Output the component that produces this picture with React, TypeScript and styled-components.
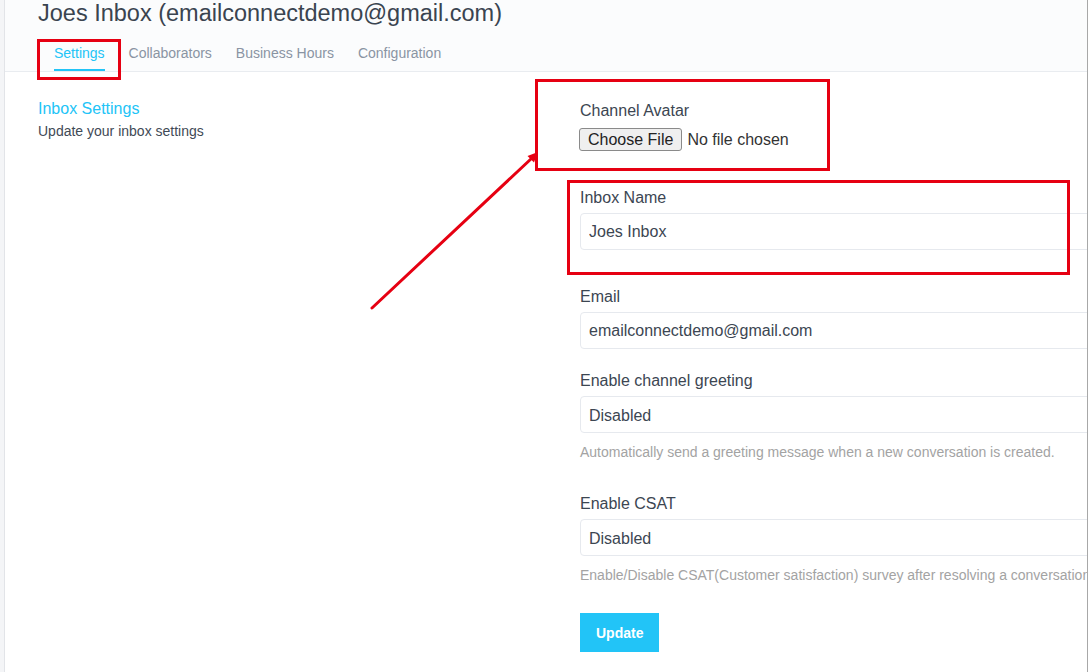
import React from "react";
import styled, { createGlobalStyle } from "styled-components";

const GlobalStyle = createGlobalStyle`
  html, body {
    margin: 0;
    padding: 0;
    background: #ffffff;
    overflow: hidden;
  }
  body {
    font-family: "Liberation Sans", Arial, sans-serif;
  }
  * { box-sizing: border-box; }
`;

const ACCENT = "#22c4f7";
const RED = "#e60012";

const Page = styled.div`
  position: relative;
  display: flex;
  width: 1089px;
  height: 672px;
  background: #ffffff;
`;

const SideStrip = styled.div`
  flex: 0 0 5px;
  background: #f4f5f7;
  border-right: 1px solid #e2e4e8;
`;

const Main = styled.div`
  flex: 0 0 1083px;
  display: flex;
  flex-direction: column;
  overflow: hidden;
  border-right: 1px solid #a8a8a8;
`;

const Header = styled.header`
  background: #fbfcfd;
  border-bottom: 1px solid #e9ecf0;
  padding: 0 0 0 33px;
`;

const Title = styled.h1`
  margin: 0;
  font-size: 23.5px;
  line-height: 27px;
  font-weight: 400;
  color: #3a4450;
  white-space: nowrap;
`;

const Tabs = styled.nav`
  display: flex;
  gap: 24px;
  margin-top: 9px;
  padding-left: 16px;
`;

const Tab = styled.a<{ $active?: boolean }>`
  display: block;
  padding: 9px 0 8px;
  font-size: 14px;
  line-height: 16px;
  color: ${(p) => (p.$active ? ACCENT : "#8a94a3")};
  border-bottom: 2px solid ${(p) => (p.$active ? ACCENT : "transparent")};
  text-decoration: none;
  cursor: pointer;
`;

const Content = styled.div`
  display: flex;
  padding: 28px 0 0 33px;
`;

const Intro = styled.div`
  flex: 0 0 542px;
`;

const IntroTitle = styled.h2`
  margin: 0;
  font-size: 16px;
  line-height: 18px;
  font-weight: 400;
  color: ${ACCENT};
`;

const IntroText = styled.p`
  margin: 5px 0 0;
  font-size: 14px;
  line-height: 16px;
  color: #3f4a56;
`;

const Form = styled.form`
  flex: 0 0 580px;
  padding-top: 2px;
  display: flex;
  flex-direction: column;
`;

const Field = styled.div<{ $mb?: number }>`
  margin-bottom: ${(p) => p.$mb ?? 0}px;
`;

const Label = styled.label<{ $mb?: number }>`
  display: block;
  font-size: 16px;
  line-height: 18px;
  color: #3c4652;
  margin-bottom: ${(p) => p.$mb ?? 6}px;
  white-space: nowrap;
`;

const FileInput = styled.input`
  display: block;
  font-family: "Liberation Sans", Arial, sans-serif;
  font-size: 16px;
  line-height: 18px;
  color: #333;
  height: 23px;
  margin-left: -1px;

  &::file-selector-button {
    font: inherit;
    color: #222;
    background: #efefef;
    border: 1px solid #8a8a8a;
    border-radius: 3px;
    padding: 1px 8px;
    margin-right: 5px;
    height: 23px;
  }
`;

const TextInput = styled.input`
  display: block;
  width: 100%;
  height: 37px;
  padding: 0 8px;
  border: 1px solid #e6e9ee;
  border-radius: 4px;
  background: #ffffff;
  font-family: "Liberation Sans", Arial, sans-serif;
  font-size: 16px;
  color: #3c4652;
  outline: none;
`;

const Select = styled.select`
  display: block;
  width: 100%;
  height: 37px;
  padding: 1px 8px 0;
  border: 1px solid #e6e9ee;
  border-radius: 4px;
  background: #ffffff;
  appearance: none;
  font-family: "Liberation Sans", Arial, sans-serif;
  font-size: 16px;
  color: #3c4652;
  outline: none;
`;

const Help = styled.p<{ $mt?: number }>`
  margin: ${(p) => p.$mt ?? 11}px 0 0;
  font-size: 14px;
  line-height: 16px;
  color: #a3a3a3;
  white-space: nowrap;
`;

const UpdateButton = styled.button`
  align-self: flex-start;
  margin-top: 30px;
  height: 39px;
  padding: 0 16px;
  border: none;
  border-radius: 0;
  background: ${ACCENT};
  color: #ffffff;
  font-family: "Liberation Sans", Arial, sans-serif;
  font-size: 14px;
  font-weight: 700;
  cursor: pointer;
`;

/* ---- red annotation overlay ---- */
const MarkBox = styled.div<{ $x: number; $y: number; $w: number; $h: number }>`
  position: absolute;
  left: ${(p) => p.$x}px;
  top: ${(p) => p.$y}px;
  width: ${(p) => p.$w}px;
  height: ${(p) => p.$h}px;
  border: 3px solid ${RED};
  pointer-events: none;
`;

const ArrowLayer = styled.svg`
  position: absolute;
  left: 0;
  top: 0;
  pointer-events: none;
`;

export default function App() {
  return (
    <>
      <GlobalStyle />
      <Page>
        <SideStrip />
        <Main>
          <Header>
            <Title>Joes Inbox (emailconnectdemo@gmail.com)</Title>
            <Tabs>
              <Tab $active>Settings</Tab>
              <Tab>Collaborators</Tab>
              <Tab>Business Hours</Tab>
              <Tab>Configuration</Tab>
            </Tabs>
          </Header>
          <Content>
            <Intro>
              <IntroTitle>Inbox Settings</IntroTitle>
              <IntroText>Update your inbox settings</IntroText>
            </Intro>
            <Form onSubmit={(e) => e.preventDefault()}>
              <Field $mb={38}>
                <Label $mb={8}>Channel Avatar</Label>
                <FileInput type="file" />
              </Field>
              <Field $mb={38}>
                <Label>Inbox Name</Label>
                <TextInput defaultValue="Joes Inbox" />
              </Field>
              <Field $mb={23}>
                <Label>Email</Label>
                <TextInput defaultValue="emailconnectdemo@gmail.com" />
              </Field>
              <Field $mb={35}>
                <Label>Enable channel greeting</Label>
                <Select defaultValue="disabled">
                  <option value="enabled">Enabled</option>
                  <option value="disabled">Disabled</option>
                </Select>
                <Help>
                  Automatically send a greeting message when a new conversation is created.
                </Help>
              </Field>
              <Field>
                <Label>Enable CSAT</Label>
                <Select defaultValue="disabled">
                  <option value="enabled">Enabled</option>
                  <option value="disabled">Disabled</option>
                </Select>
                <Help>
                  Enable/Disable CSAT(Customer satisfaction) survey after resolving a conversation
                </Help>
              </Field>
              <UpdateButton type="submit">Update</UpdateButton>
            </Form>
          </Content>
        </Main>

        <MarkBox $x={37} $y={39} $w={84} $h={41} />
        <MarkBox $x={535} $y={79} $w={295} $h={92} />
        <MarkBox $x={567} $y={180} $w={503} $h={95} />
        <ArrowLayer width="1089" height="672" viewBox="0 0 1089 672">
          <line x1="372" y1="308" x2="532" y2="158" stroke={RED} strokeWidth="3" strokeLinecap="round" />
          <polygon points="538,152 534,162.5 527.5,156" fill={RED} />
        </ArrowLayer>
      </Page>
    </>
  );
}
